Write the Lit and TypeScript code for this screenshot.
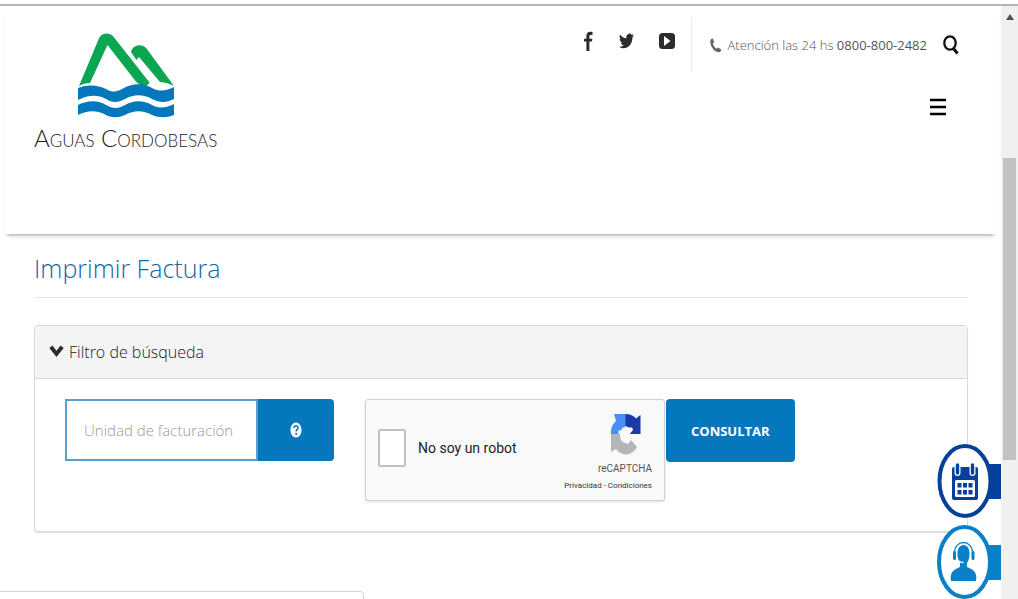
import { LitElement, html, css, svg } from "lit";
import { customElement, state } from "lit/decorators.js";

const facebookIcon = svg`<svg class="icon" width="12" height="22" viewBox="0 0 12 22" aria-hidden="true">
  <path fill="#2b2b2b" d="M10.500 2v3H9C7.700 5 7.400 5.600 7.400 6.700v2.100h3l-.4 2.700H7.400V21H4.400v-9.500H2V8.800h2.400V6.200C4.400 3.300 5.900 1.800 8.300 1.800c1.100 0 1.900.1 2.200.2z"/></svg>`;

const twitterIcon = svg`<svg class="icon" width="15" height="18" viewBox="0 0 24 24" preserveAspectRatio="none" aria-hidden="true">
  <path fill="#2b2b2b" d="M24 4.600a10 10 0 0 1-2.800.8 5 5 0 0 0 2.100-2.700 10 10 0 0 1-3.100 1.200 4.900 4.900 0 0 0-8.400 4.500A14 14 0 0 1 1.700 3.200a4.900 4.900 0 0 0 1.500 6.500 5 5 0 0 1-2.200-.6v.1a4.900 4.900 0 0 0 3.900 4.800 5 5 0 0 1-2.200.1 4.900 4.900 0 0 0 4.600 3.400A10 10 0 0 1 0 19.500 14 14 0 0 0 7.500 21.700c9.100 0 14-7.500 14-14v-.6A10 10 0 0 0 24 4.600z"/></svg>`;

const youtubeIcon = svg`<svg class="icon" width="16" height="16" viewBox="0 0 16 16" aria-hidden="true">
  <rect width="16" height="16" rx="3.500" fill="#2b2b2b"/>
  <path fill="#fff" d="M5 3v10l6.500-5z"/></svg>`;

const phoneIcon = svg`<svg class="icon" width="12" height="15" viewBox="0 0 12 15" aria-hidden="true">
  <path fill="#666" d="M1.200.9 3 .5l1.200 3.700-1.300 1.300c.6 2.300 2 4.300 3.700 5.300l1.500-1.300 3 1.900c.2 1.500-.8 2.600-2.300 2.800C4.300 14.300.6 9 .3 4.100.2 2.500.4 1.400 1.200.9z"/></svg>`;

const searchIcon = svg`<svg class="icon" width="16" height="20" viewBox="0 0 16 20" aria-hidden="true">
  <ellipse cx="7" cy="8" rx="5.700" ry="6.700" fill="none" stroke="#111" stroke-width="2.300"/>
  <path d="m10.500 13.500 4 5" stroke="#111" stroke-width="3"/></svg>`;

const menuIcon = svg`<svg class="icon" width="16" height="18" viewBox="0 0 16 18" aria-hidden="true">
  <path d="M0 2h16M0 9h16M0 16h16" stroke="#000" stroke-width="2.600"/></svg>`;

const chevronIcon = svg`<svg class="icon" width="15" height="14" viewBox="0 0 16 14" aria-hidden="true">
  <path d="m2 1.500 6 7.500 6-7.500" fill="none" stroke="#2b2b2b" stroke-width="4.200"/></svg>`;

const brandMark = svg`<svg class="brand-mark" width="98" height="88" viewBox="0 0 98 88" aria-hidden="true">
  <path fill="#0aa651" d="M2 56 21.500 9.500C24 2 33.500 1.500 37.500 8L72.500 52.500c-1 2.500-4 4.500-6 4-2.500-1-5.500-2.500-8-5.500L30.500 15 13 53c-4 0-8 1-11 3z"/>
  <path fill="#0aa651" d="M54 22c1.500-6.500 10-9.500 15.500-3.500L97 56c-4-2.500-9-3.500-14-4L62 27l-2.500 3z"/>
  <path fill="#0477bd" d="M1 58c10-4 20-3 28 1 7 4 11 3 18-1 9-5 19-5 28 0 8 4 14 3 22-1v12c-8 4-14 4-22 0-9-5-18-5-27 0-7 4-13 4-19 0-9-5-18-4-28 1z"/>
  <path fill="#0477bd" d="M1 75c10-5 20-5 28 0 7 4 12 4 19 0 9-5 18-5 27 0 8 4 14 3 22-1v11c-8 3-14 3-22 0-9-5-18-5-27 0-7 3-13 3-19 0-9-5-18-5-28 0z"/></svg>`;

const helpIcon = svg`<svg class="icon" width="12" height="16" viewBox="0 0 12 16" aria-hidden="true">
  <ellipse cx="6" cy="8" rx="5.600" ry="7.500" fill="#fff"/>
  <path d="M4 6c.2-3 4-2.800 4-.3C8 7.500 6.200 7.300 6.200 9.500" fill="none" stroke="#0477bd" stroke-width="1.600"/>
  <rect x="5.300" y="10.800" width="1.800" height="2" fill="#0477bd"/></svg>`;

const captchaMark = svg`<svg class="icon" width="31" height="42" viewBox="0 0 31 42" aria-hidden="true">
  <path fill="#4a8df6" d="M4 1h12v13l-4 1-2 6H1c0-6 1-9 5-13z"/>
  <path fill="#1c3aa9" d="M15.500 1c5 0 8 1.500 10.500 4.500l4.500-3.500V21H19l4-4c-1-2-3-3-7.500-3z"/>
  <path fill="#b4b5b7" d="M1 21h9c0 6 2 8 5 9 3 0 5-1 6-3l6 7c-5 9-15 10-21 2l-5 3z"/>
  <path fill="#fafafa" d="m9 17 5 2 1-6 3 1 0 4 3-4 2 2-3 5-2 1-1 5 3 2-3 2-4-5-1-4-4-2z"/></svg>`;

const calendarIcon = svg`<svg class="bubble" width="64" height="74" viewBox="0 0 64 74" aria-hidden="true">
  <path fill="#05409b" d="M46 20h18v35H46z"/>
  <ellipse cx="28" cy="37" rx="25.500" ry="35" fill="#fff" stroke="#05409b" stroke-width="4"/>
  <rect x="15" y="23" width="26" height="33" rx="2" fill="#05409b"/>
  <path d="M20.500 21v8M35.500 21v8" stroke="#fff" stroke-width="6" stroke-linecap="round"/>
  <path d="M20.500 21v8M35.500 21v8" stroke="#05409b" stroke-width="3.400" stroke-linecap="round"/>
  <rect x="18" y="36" width="20" height="17" rx="1.500" fill="#fff"/>
  <path fill="#05409b" d="M20.500 39h4v4.500h-4zM26 39h4v4.500h-4zM31.500 39h4v4.500h-4zM20.500 46h4v4.500h-4zM26 46h4v4.500h-4zM31.500 46h4v4.500h-4z"/></svg>`;

const agentIcon = svg`<svg class="bubble" width="64" height="74" viewBox="0 0 64 74" aria-hidden="true">
  <path fill="#0a80c8" d="M46 20h18v35H46z"/>
  <ellipse cx="27.500" cy="37" rx="25.500" ry="35" fill="#fff" stroke="#0a80c8" stroke-width="4"/>
  <path d="M17.500 28c0-14 18-14 18 0" fill="none" stroke="#0a80c8" stroke-width="1.300"/>
  <path fill="#0a80c8" d="M20.500 29c-.5-12 12.500-12 12 0 0 4-1 7-2.500 9v4c3 1.500 8 3 9 8 .6 2.500 0 6 0 6H14s-.6-3.500 0-6c1-5 6-6.500 9-8v-4c-1.500-2-2.500-5-2.500-9z"/>
  <rect x="16" y="26" width="3" height="9" rx="1.500" fill="#0a80c8"/>
  <rect x="34.500" y="26" width="3" height="9" rx="1.500" fill="#0a80c8"/>
  <path d="M20 34c1.500 3 3.500 3.500 6.500 3.500" fill="none" stroke="#fff" stroke-width="1.500"/></svg>`;

@customElement("site-header")
class SiteHeader extends LitElement {
  static styles = css`
    :host {
      display: flex;
      justify-content: space-between;
      align-items: flex-start;
      min-height: 228px;
      box-sizing: border-box;
      margin: 0 4px;
      padding: 12px 38px 0 30px;
      background: #fff;
      box-shadow: 0 4px 4px -3px #999;
    }
    a { color: inherit; text-decoration: none; }
    button { border: 0; padding: 0; background: none; cursor: pointer; }
    .icon, .brand-mark { display: block; }
    .brand {
      display: flex;
      flex-direction: column;
      align-items: center;
      padding-top: 12px;
      color: #1c1c1c;
      font: 300 24px/40px Lato, sans-serif;
      font-variant: small-caps;
    }
    .tools { display: flex; flex-direction: column; align-items: flex-end; gap: 26px; }
    .top { display: flex; align-items: center; }
    .social { display: flex; align-items: center; gap: 25px; height: 54px; padding: 0 16px 8px 0; box-sizing: border-box; border-right: 1px solid #e9e9e9; }
    .phone { display: flex; align-items: center; gap: 6px; padding: 0 16px 0 18px; color: #555; font: 300 13px/20px "Open Sans", sans-serif; }
    .number { font-weight: 400; }
    .menu { margin-right: 13px; }
  `;

  render() {
    return html`
      <a class="brand" href="#">${brandMark}<span>Aguas Cordobesas</span></a>
      <div class="tools">
        <div class="top">
          <nav class="social">
            <a href="#" aria-label="Facebook">${facebookIcon}</a>
            <a href="#" aria-label="Twitter">${twitterIcon}</a>
            <a href="#" aria-label="YouTube">${youtubeIcon}</a>
          </nav>
          <a class="phone" href="tel:08008002482">${phoneIcon}<span>Atención las 24 hs <span class="number">0800-800-2482</span></span></a>
          <button aria-label="Buscar">${searchIcon}</button>
        </div>
        <button class="menu" aria-label="Menú">${menuIcon}</button>
      </div>
    `;
  }
}

@customElement("captcha-box")
class CaptchaBox extends LitElement {
  static styles = css`
    :host {
      display: flex;
      justify-content: space-between;
      box-sizing: border-box;
      width: 300px;
      min-height: 102px;
      padding: 12px 12px 4px;
      border: 1px solid #d3d3d3;
      border-radius: 3px;
      background: #f9f9f9;
      box-shadow: 0 1px 3px #ddd;
      font-family: Roboto, sans-serif;
      color: #222;
    }
    .check { display: flex; align-items: center; gap: 12px; padding-bottom: 12px; font-size: 14px; line-height: 20px; }
    .box { appearance: none; width: 28px; height: 38px; margin: 0; border: 2px solid #c1c1c1; border-radius: 2px; background: #fff; }
    .box:checked { background: #4a8df6; }
    .mark { display: flex; flex-direction: column; align-items: flex-end; color: #555; font-size: 10px; line-height: 18px; }
    .logo { padding: 1px 11px 5px 0; }
    .icon { display: block; }
    .legal { font-size: 8px; line-height: 16px; color: #333; }
    a { color: inherit; text-decoration: none; }
  `;

  render() {
    return html`
      <label class="check"><input class="box" type="checkbox" />No soy un robot</label>
      <div class="mark">
        <span class="logo">${captchaMark}</span>
        <span>reCAPTCHA</span>
        <span class="legal"><a href="#">Privacidad</a> - <a href="#">Condiciones</a></span>
      </div>
    `;
  }
}

@customElement("app-root")
class AppRoot extends LitElement {
  @state() private open = true;

  static styles = css`
    :host {
      display: flex;
      height: 100vh;
      overflow: hidden;
      box-sizing: border-box;
      border-top: 1px solid #fff;
      background: #fff;
      font-family: "Open Sans", sans-serif;
    }
    .frame { display: flex; flex: 1; min-width: 0; margin-top: 3px; border-top: 2px solid #b4b4b4; }
    .page { flex: 1; min-width: 0; }
    .content { padding: 0 33px 0 34px; }
    .title { margin: 0; padding: 16px 0 11px; border-bottom: 1px solid #e8e8e8; color: #1267a4; font-size: 25px; font-weight: 300; line-height: 36px; }
    .panel { margin-top: 27px; border: 1px solid #d9d9d9; border-radius: 4px; box-shadow: 0 1px 1px #ddd; }
    .heading {
      display: flex;
      align-items: center;
      gap: 5px;
      width: 100%;
      height: 53px;
      padding: 0 14px;
      border: 0;
      border-bottom: 1px solid #d9d9d9;
      border-radius: 3px 3px 0 0;
      background: #f4f4f4;
      color: #222;
      font: 300 16px/24px "Open Sans", sans-serif;
      cursor: pointer;
    }
    .icon, .bubble { display: block; }
    .filters { display: flex; align-items: flex-start; padding: 20px 30px 30px; }
    .group { display: flex; height: 62px; margin-right: 31px; }
    .unit {
      width: 193px;
      box-sizing: border-box;
      padding: 0 17px;
      border: 2px solid #5a9fd4;
      border-radius: 0;
      background: #fff;
      color: #333;
      font: 300 15px/24px "Open Sans", sans-serif;
      outline: 0;
    }
    .unit::placeholder { color: #999; opacity: 1; }
    .help, .submit { display: flex; align-items: center; justify-content: center; border: 0; background: #0477bd; color: #fff; cursor: pointer; }
    .help { width: 76px; padding: 0; border-radius: 0 4px 4px 0; }
    .submit { height: 63px; margin-left: 1px; padding: 0 25px; border-radius: 4px; font: 700 13px/20px "Open Sans", sans-serif; }
    .scroll { display: flex; flex-direction: column; width: 17px; flex: none; box-sizing: border-box; padding: 0 2px; background: #f0f0f0; }
    .arrow { display: block; margin: 8px auto 0; }
    .thumb { height: 51%; margin-top: 138px; background: #c1c1c1; }
    .dock { position: fixed; right: 17px; bottom: 0; display: flex; flex-direction: column; gap: 7px; }
    .status { position: fixed; left: -1px; bottom: 0; width: 363px; height: 7px; border: 1px solid #d5d5d5; border-bottom: 0; border-radius: 0 4px 0 0; background: #fff; }
  `;

  private toggle() {
    this.open = !this.open;
  }

  render() {
    return html`
      <div class="frame">
        <div class="page">
          <site-header></site-header>
          <main class="content">
            <h1 class="title">Imprimir Factura</h1>
            <section class="panel">
              <button class="heading" aria-expanded=${this.open} @click=${this.toggle}>${chevronIcon}Filtro de búsqueda</button>
              ${this.open
                ? html`<form class="filters" @submit=${(e: Event) => e.preventDefault()}>
                    <div class="group">
                      <input class="unit" type="text" aria-label="Unidad de facturación" placeholder="Unidad de facturación" />
                      <button class="help" type="button" aria-label="Ayuda">${helpIcon}</button>
                    </div>
                    <captcha-box></captcha-box>
                    <button class="submit">CONSULTAR</button>
                  </form>`
                : null}
            </section>
          </main>
        </div>
        <div class="scroll" aria-hidden="true">
          <svg class="arrow" width="8" height="6" viewBox="0 0 8 6"><path fill="#505050" d="M4 0l4 6H0z"/></svg>
          <div class="thumb"></div>
        </div>
      </div>
      <nav class="dock">
        <a href="#" aria-label="Turnos">${calendarIcon}</a>
        <a href="#" aria-label="Atención en línea">${agentIcon}</a>
      </nav>
      <div class="status"></div>
    `;
  }
}
